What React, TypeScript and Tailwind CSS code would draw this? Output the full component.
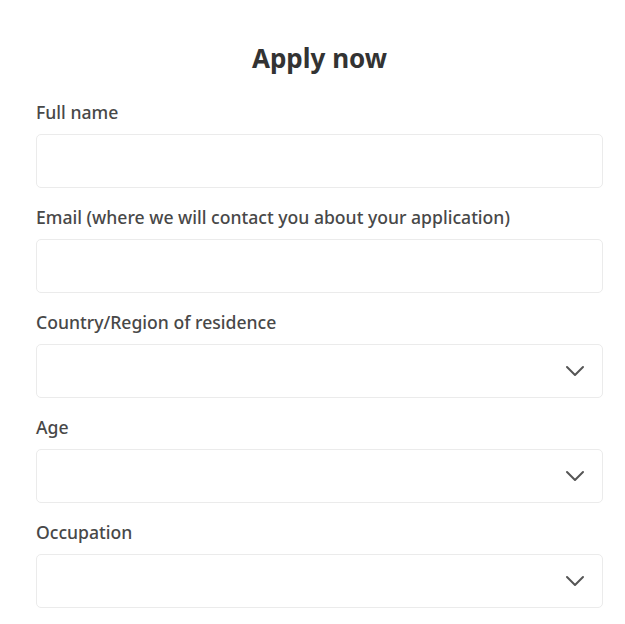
const fields = [
  { label: "Full name", select: false },
  { label: "Email (where we will contact you about your application)", select: false },
  { label: "Country/Region of residence", select: true },
  { label: "Age", select: true },
  { label: "Occupation", select: true },
];

const Chevron = () => (
  <svg width="20" height="12" viewBox="0 0 20 12" fill="none" className="shrink-0">
    <path d="M2 2l8 8 8-8" stroke="#555" strokeWidth="2" strokeLinecap="round" strokeLinejoin="round" />
  </svg>
);

export default function App() {
  return (
    <div className="h-screen overflow-hidden bg-white font-['Noto_Sans',sans-serif]">
      <div className="w-[639px] px-9 pt-[38px]">
        <h1 className="text-center text-[26px] font-bold leading-[40px] text-[#333]">Apply now</h1>
        <div className="mt-[24px]">
          {fields.map((f) => (
            <div key={f.label} className="mb-[19px]">
              <label className="block text-[17.6px] leading-[24px] text-[#484848] font-medium mt-[-2px] mb-[10px]">{f.label}</label>
              <div className="h-[54px] w-full rounded-[5px] border border-[#ebebeb] flex items-center justify-end pr-[17px]">
                {f.select && <Chevron />}
              </div>
            </div>
          ))}
        </div>
      </div>
    </div>
  );
}
